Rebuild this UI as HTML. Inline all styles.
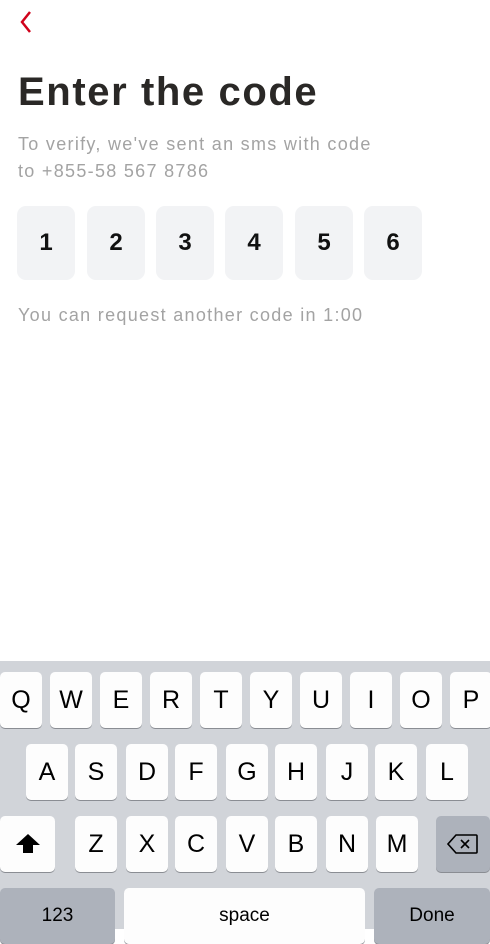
<!DOCTYPE html><html><head><style>
*{margin:0;padding:0;box-sizing:border-box}
body{width:490px;height:929px;background:#fff;position:relative;overflow:hidden;font-family:"Liberation Sans",sans-serif}
.a{position:absolute}
h1{position:absolute;left:18px;top:70px;font-size:40px;font-weight:bold;color:#2a2826;letter-spacing:1.6px}
.sub{left:18px;color:#a3a3a3;font-size:18px;line-height:27px;letter-spacing:1.3px}
.box{position:absolute;top:206px;width:58px;height:74px;background:#f2f3f5;border-radius:9px;font-size:24px;font-weight:bold;color:#111;text-align:center;line-height:74px}
.kb{position:absolute;left:0;top:661px;width:490px;height:268px;background:#d1d4d9}
.k{position:absolute;width:42px;height:56px;background:#fdfdfd;border-radius:5px;box-shadow:0 1px 0 #8a8d93;font-size:25px;text-align:center;line-height:56px;color:#000}
.g{background:#adb2bb}
</style></head><body>
<svg class="a" style="left:18px;top:10px" width="16" height="24" viewBox="0 0 16 24"><path d="M12 2 L4 12 L12 22" fill="none" stroke="#d0021b" stroke-width="2.5"/></svg>
<h1>Enter the code</h1>
<div class="a sub" style="top:131px">To verify, we've sent an sms with code<br>to +855-58 567 8786</div>
<div class="box" style="left:17px">1</div><div class="box" style="left:87px">2</div><div class="box" style="left:156px">3</div><div class="box" style="left:225px">4</div><div class="box" style="left:295px">5</div><div class="box" style="left:364px">6</div>
<div class="a sub" style="top:302px">You can request another code in 1:00</div>
<div class="kb">
<div class="k" style="left:0;top:11px">Q</div><div class="k" style="left:50px;top:11px">W</div><div class="k" style="left:100px;top:11px">E</div><div class="k" style="left:150px;top:11px">R</div><div class="k" style="left:200px;top:11px">T</div><div class="k" style="left:250px;top:11px">Y</div><div class="k" style="left:300px;top:11px">U</div><div class="k" style="left:350px;top:11px">I</div><div class="k" style="left:400px;top:11px">O</div><div class="k" style="left:450px;top:11px">P</div>
<div class="k" style="left:26px;top:83px">A</div><div class="k" style="left:75px;top:83px">S</div><div class="k" style="left:126px;top:83px">D</div><div class="k" style="left:175px;top:83px">F</div><div class="k" style="left:226px;top:83px">G</div><div class="k" style="left:275px;top:83px">H</div><div class="k" style="left:326px;top:83px">J</div><div class="k" style="left:375px;top:83px">K</div><div class="k" style="left:426px;top:83px">L</div>
<div class="k" style="left:0;top:155px;width:55px"><svg width="26" height="22" viewBox="0 0 26 22" style="margin-top:17px"><path d="M13 1 L25 12 L18 12 L18 20 L8 20 L8 12 L1 12 Z" fill="#000"/></svg></div>
<div class="k" style="left:75px;top:155px">Z</div><div class="k" style="left:126px;top:155px">X</div><div class="k" style="left:175px;top:155px">C</div><div class="k" style="left:226px;top:155px">V</div><div class="k" style="left:275px;top:155px">B</div><div class="k" style="left:326px;top:155px">N</div><div class="k" style="left:376px;top:155px">M</div>
<div class="k g" style="left:436px;top:155px;width:54px"><svg width="32" height="22" viewBox="0 0 32 22" style="margin-top:17px"><path d="M9 2 L29 2 Q30 2 30 3 L30 19 Q30 20 29 20 L9 20 L1 11 Z" fill="none" stroke="#000" stroke-width="1.6"/><path d="M14 7 L22 15 M22 7 L14 15" stroke="#000" stroke-width="1.6"/></svg></div>
<div class="k g" style="left:0;top:227px;width:115px;font-size:19px;line-height:56px">123</div>
<div class="k" style="left:124px;top:227px;width:241px;font-size:19px">space</div>
<div class="k g" style="left:374px;top:227px;width:116px;font-size:19px">Done</div>
</div>
</body></html>
